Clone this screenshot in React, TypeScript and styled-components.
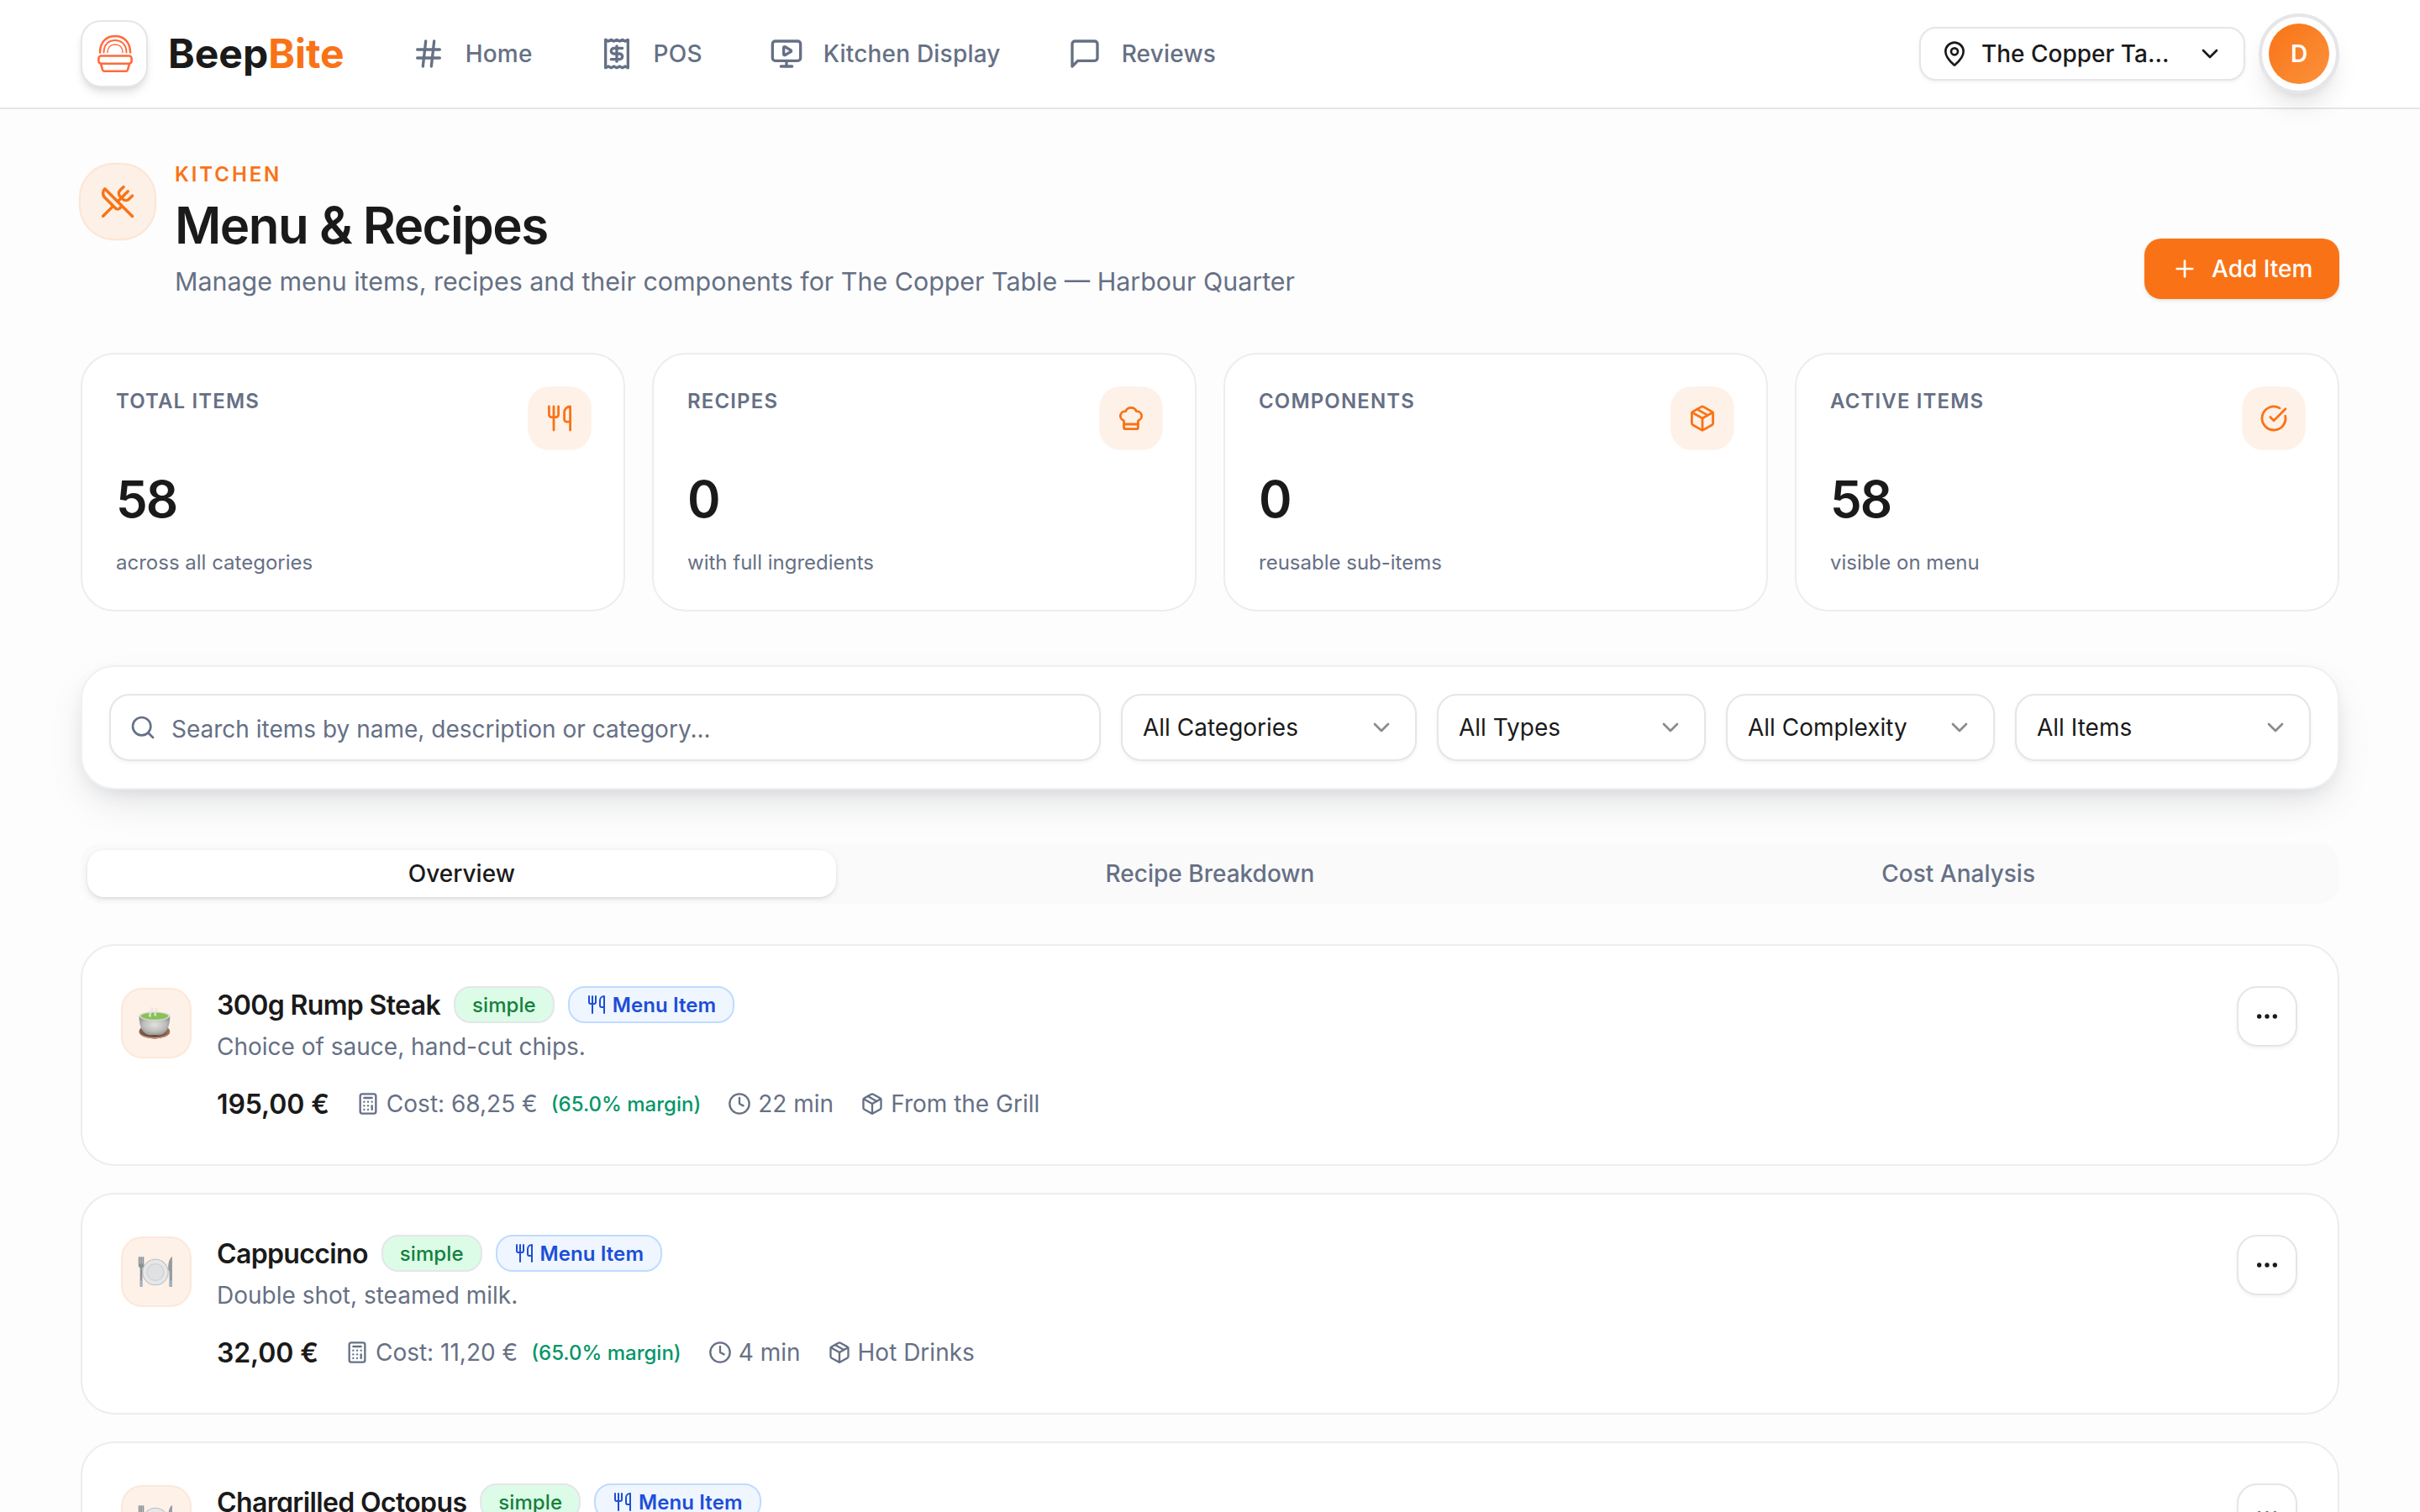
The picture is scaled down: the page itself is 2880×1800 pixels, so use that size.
import React from "react";
import styled, { createGlobalStyle } from "styled-components";
import {
  Calculator,
  ChefHat,
  ChevronDown,
  CircleCheckBig,
  Clock,
  Ellipsis,
  Hash,
  MapPin,
  MonitorPlay,
  Package,
  Plus,
  Search,
  UtensilsCrossed,
} from "lucide-react";

const color = {
  ink: "#1a1a1a",
  muted: "#667085",
  line: "#e5e5ea",
  softLine: "#ededf1",
  orange: "#f97316",
  peach: "#fef1e8",
};

const Global = createGlobalStyle`
  *, *::before, *::after { box-sizing: border-box; }
  html, body { margin: 0; height: 1800px; overflow: hidden; }
  body {
    background: #fdfdfd;
    color: ${color.ink};
    font-family: Inter, "Liberation Sans", sans-serif;
    font-size: 28px;
    -webkit-font-smoothing: antialiased;
  }
  button, input { font: inherit; color: inherit; margin: 0; }
  h1, h2, p { margin: 0; font-weight: inherit; }
  svg { display: block; flex: none; }
`;

const Page = styled.div`
  height: 1800px;
  overflow: hidden;
`;

/* ---------- header ---------- */
const Header = styled.header`
  display: flex;
  align-items: center;
  height: 130px;
  padding: 0 96px;
  background: #fff;
  border-bottom: 2px solid ${color.line};
`;
const LogoBox = styled.div`
  display: grid;
  place-items: center;
  width: 80px;
  height: 80px;
  padding-left: 2px;
  border: 2px solid ${color.line};
  border-radius: 24px;
  background: #fff;
  box-shadow: 0 8px 12px -2px rgba(0, 0, 0, 0.1), 0 4px 8px -4px rgba(0, 0, 0, 0.1);
`;
const Brand = styled.span`
  margin-left: 24px;
  font-size: 48px;
  font-weight: 700;
  line-height: 64px;
  letter-spacing: 0;
  em { font-style: normal; color: ${color.orange}; }
`;
const Nav = styled.nav`
  display: flex;
  gap: 80px;
  margin-left: 80px;
`;
const NavLink = styled.a`
  display: flex;
  align-items: center;
  gap: 24px;
  color: ${color.muted};
  font-weight: 500;
  letter-spacing: 0.2px;
`;
const HeaderEnd = styled.div`
  display: flex;
  align-items: center;
  gap: 16px;
  margin-left: auto;
`;
const LocationPicker = styled.button`
  display: flex;
  align-items: center;
  gap: 16px;
  width: 388px;
  height: 64px;
  padding: 0 24px;
  border: 2px solid ${color.line};
  border-radius: 20px;
  background: #fff;
  font-weight: 500;
  box-shadow: 0 2px 4px rgba(0, 0, 0, 0.05);
  svg:last-child { margin-left: auto; }
`;
const AvatarRing = styled.div`
  position: relative;
  display: grid;
  place-items: center;
  width: 96px;
  height: 96px;
  border: 4px solid ${color.line};
  border-radius: 50%;
  background: #fff;
  box-shadow: 0 20px 30px -6px rgba(0, 0, 0, 0.1), 0 8px 12px -8px rgba(0, 0, 0, 0.1);
`;
const Avatar = styled.div`
  display: grid;
  place-items: center;
  width: 72px;
  height: 72px;
  border-radius: 50%;
  background: linear-gradient(135deg, #f97316, #fb923c);
  color: #fff;
  font-weight: 600;
`;

/* ---------- page heading ---------- */
const Main = styled.main`
  padding: 62px 96px 0;
`;
const Hero = styled.section`
  display: flex;
  align-items: flex-start;
  height: 164px;
`;
const HeroIcon = styled.div`
  display: grid;
  place-items: center;
  width: 88px;
  height: 88px;
  margin: 4px 24px 0 0;
  border: 2px solid #fde6d6;
  border-radius: 40px;
  background: #fdf0e7;
  color: ${color.orange};
  transform: scale(1.05);
`;
const Eyebrow = styled.p`
  color: ${color.orange};
  font-size: 24px;
  font-weight: 600;
  line-height: 32px;
  letter-spacing: 2.9px;
`;
const Title = styled.h1`
  margin-top: 10px;
  font-size: 60px;
  font-weight: 600;
  line-height: 68px;
  letter-spacing: -1.5px;
`;
const Lead = styled.p`
  margin-top: 12px;
  color: ${color.muted};
  font-size: 30.4px;
  line-height: 42px;
`;
const AddButton = styled.button`
  display: flex;
  align-items: center;
  align-self: flex-end;
  gap: 16px;
  width: 232px;
  height: 72px;
  margin-left: auto;
  padding: 0 32px;
  border: 0;
  border-radius: 20px;
  background: ${color.orange};
  color: #fff;
  font-weight: 500;
  white-space: nowrap;
  box-shadow: 0 2px 4px rgba(0, 0, 0, 0.1);
`;

/* ---------- stats ---------- */
const Stats = styled.section`
  display: grid;
  grid-template-columns: repeat(4, 1fr);
  gap: 32px;
  margin-top: 64px;
`;
const StatCard = styled.article`
  height: 308px;
  padding: 40px;
  border: 2px solid ${color.softLine};
  border-radius: 40px;
  background: #fff;
`;
const StatHead = styled.div`
  display: flex;
  justify-content: space-between;
  height: 72px;
`;
const StatLabel = styled.span`
  color: ${color.muted};
  font-size: 24px;
  font-weight: 600;
  line-height: 32px;
  letter-spacing: 1.15px;
`;
const StatIcon = styled.div`
  display: grid;
  place-items: center;
  width: 72px;
  height: 72px;
  border-radius: 24px;
  background: ${color.peach};
  color: ${color.orange};
  transform: scale(1.05);
`;
const StatValue = styled.p`
  margin-top: 30px;
  font-size: 60px;
  font-weight: 600;
  line-height: 60px;
  letter-spacing: -2px;
`;
const StatNote = styled.p`
  margin-top: 28px;
  color: ${color.muted};
  font-size: 24px;
  line-height: 36px;
`;

/* ---------- filters ---------- */
const FilterBar = styled.section`
  display: flex;
  gap: 24px;
  height: 148px;
  margin-top: 64px;
  padding: 32px;
  border: 2px solid #f0f0f2;
  border-radius: 40px;
  background: #fff;
  box-shadow: 0 20px 50px -10px rgba(15, 23, 42, 0.12), 0 8px 24px -8px rgba(15, 23, 42, 0.1);
`;
const SearchField = styled.label`
  display: flex;
  flex: 1;
  align-items: center;
  gap: 18px;
  height: 80px;
  padding: 0 22px;
  border: 2px solid ${color.line};
  border-radius: 24px;
  background: #fff;
  color: ${color.muted};
  box-shadow: 0 2px 4px rgba(0, 0, 0, 0.05);
`;
const SearchInput = styled.input`
  flex: 1;
  height: 76px;
  padding: 3px 0 0;
  border: 0;
  outline: 0;
  background: none;
  &::placeholder { color: ${color.muted}; opacity: 1; }
`;
const FilterSelect = styled.button<{ $width: number }>`
  display: flex;
  align-items: center;
  justify-content: space-between;
  width: ${(p) => p.$width}px;
  height: 80px;
  padding: 0 24px;
  border: 2px solid ${color.line};
  border-radius: 24px;
  background: #fff;
  box-shadow: 0 2px 4px rgba(0, 0, 0, 0.05);
  svg { opacity: 0.5; }
`;

/* ---------- tabs ---------- */
const Tabs = styled.div`
  display: grid;
  grid-template-columns: repeat(3, 1fr);
  height: 72px;
  margin-top: 64px;
  padding: 8px;
  border-radius: 24px;
  background: #fafafa;
`;
const Tab = styled.button<{ $active?: boolean }>`
  border: 0;
  padding: 0;
  border-radius: 20px;
  background: ${(p) => (p.$active ? "#fff" : "transparent")};
  color: ${(p) => (p.$active ? color.ink : color.muted)};
  font-weight: 500;
  box-shadow: ${(p) => (p.$active ? "0 2px 6px rgba(0,0,0,.1), 0 2px 4px -2px rgba(0,0,0,.1)" : "none")};
`;

/* ---------- menu list ---------- */
const List = styled.section`
  display: flex;
  flex-direction: column;
  gap: 32px;
  margin-top: 48px;
`;
const ItemCard = styled.article`
  display: flex;
  align-items: flex-start;
  height: 264px;
  padding: 48px;
  border: 2px solid ${color.softLine};
  border-radius: 40px;
  background: #fff;
`;
const Thumb = styled.div`
  display: grid;
  place-items: center;
  width: 80px;
  height: 80px;
  margin: 4px 32px 0 0;
  padding-right: 3px;
  border: 2px solid #fde8d9;
  border-radius: 24px;
  background: ${color.peach};
  transform: scale(1.05);
`;
const TitleRow = styled.div`
  display: flex;
  align-items: center;
  gap: 16px;
  height: 44px;
`;
const ItemName = styled.h2`
  font-size: 32px;
  font-weight: 600;
  letter-spacing: -0.64px;
`;
const Badge = styled.span<{ $tone: "green" | "blue" }>`
  display: flex;
  align-items: center;
  gap: 7px;
  height: 44px;
  padding: 0 20px;
  border: 2px solid ${(p) => (p.$tone === "green" ? color.line : "#bfdbfe")};
  border-radius: 20px;
  background: ${(p) => (p.$tone === "green" ? "#dcfce7" : "#eff6ff")};
  color: ${(p) => (p.$tone === "green" ? "#15803d" : "#1d4ed8")};
  font-size: 24px;
  font-weight: ${(p) => (p.$tone === "green" ? 500 : 600)};
  letter-spacing: 0.08px;
`;
const Description = styled.p`
  margin-top: 8px;
  color: ${color.muted};
  line-height: 40px;
`;
const MetaRow = styled.div`
  display: flex;
  align-items: center;
  gap: 32px;
  height: 48px;
  margin-top: 24px;
  color: ${color.muted};
`;
const Price = styled.span`
  color: ${color.ink};
  font-size: 32px;
  font-weight: 600;
  letter-spacing: -0.1px;
`;
const Meta = styled.span`
  display: flex;
  align-items: center;
  gap: 8px;
`;
const Margin = styled.span`
  margin-left: 8px;
  color: #059669;
  font-size: 24px;
  font-weight: 500;
`;
const MoreButton = styled.button`
  display: grid;
  place-items: center;
  width: 72px;
  height: 72px;
  margin-left: auto;
  padding: 0;
  border: 2px solid ${color.line};
  border-radius: 24px;
  background: #fff;
  box-shadow: 0 2px 4px rgba(0, 0, 0, 0.05);
`;

/* ---------- drawings ---------- */
const BurgerLogo = () => (
  <svg width="46" height="46" viewBox="0 0 46 46" fill="none" stroke="#ff6b3d" strokeLinecap="round" strokeLinejoin="round">
    <path d="M5 21.500C5 9 12.500 2 23 2s18 7 18 19.500" strokeWidth="2.500" />
    <path d="M9.500 21.500C9.500 12.500 15 7 23 7s13.500 5.500 13.500 14.500" strokeWidth="2" />
    <path d="M14 21.500c0-6 3.500-9.500 9-9.500s9 3.500 9 9.500" strokeWidth="1.500" />
    <rect x="3.400" y="25.500" width="39.200" height="9.300" rx="3" strokeWidth="2.600" />
    <path d="M6 34.800l2 7.400q.5 1.600 2.200 1.600h25.600q1.700 0 2.200-1.600l2-7.400" strokeWidth="2.600" />
  </svg>
);
const ReceiptIcon = () => (
  <svg width="40" height="40" viewBox="0 0 24 24" fill="none" stroke="currentColor" strokeWidth="2" strokeLinecap="round" strokeLinejoin="round">
    <path d="M4 2v20l2-1 2 1 2-1 2 1 2-1 2 1 2-1 2 1V2l-2 1-2-1-2 1-2-1-2 1-2-1-2 1Z" />
    <path d="M16 8h-6a2 2 0 1 0 0 4h4a2 2 0 1 1 0 4H8" />
    <path d="M12 17.500v-11" />
  </svg>
);
const ChatIcon = () => (
  <svg width="40" height="40" viewBox="0 0 24 24" fill="none" stroke="currentColor" strokeWidth="2" strokeLinecap="round" strokeLinejoin="round">
    <path d="M21 15a2 2 0 0 1-2 2H7l-4 4V5a2 2 0 0 1 2-2h14a2 2 0 0 1 2 2z" />
  </svg>
);
const CutleryIcon = ({ size }: { size: number }) => (
  <svg width={size} height={size} viewBox="0 0 24 24" fill="none" stroke="currentColor" strokeWidth="2" strokeLinecap="round" strokeLinejoin="round">
    <path d="M3 2v7c0 1.100.9 2 2 2h4a2 2 0 0 0 2-2V2" />
    <path d="M7 2v20" />
    <path d="M21 15V2a5 5 0 0 0-5 5v6c0 1.100.9 2 2 2h3Zm0 0v7" />
  </svg>
);
const TeaCup = () => (
  <svg width="40" height="40" viewBox="0 0 40 40">
    <defs>
      <radialGradient id="cup" cx=".5" cy=".45" r=".6">
        <stop offset="0" stopColor="#e2e2e0" />
        <stop offset=".6" stopColor="#bdbdbb" />
        <stop offset="1" stopColor="#8b8b89" />
      </radialGradient>
      <linearGradient id="saucer" x1="0" x2="1">
        <stop offset="0" stopColor="#8a6350" />
        <stop offset=".5" stopColor="#4b2c20" />
        <stop offset="1" stopColor="#a07460" />
      </linearGradient>
    </defs>
    <ellipse cx="19" cy="29.500" rx="17.500" ry="8" fill="url(#saucer)" />
    <path d="M1.500 29.500c0 10.500 35 10.500 35 0 0 8-35 8-35 0z" fill="#b98a72" />
    <path d="M1.500 12c0 12 4 21 12 21.800h11c8-.8 12-9.800 12-21.800z" fill="url(#cup)" />
    <ellipse cx="19" cy="12" rx="17.500" ry="5.200" fill="#d7d9d2" />
    <ellipse cx="19" cy="12" rx="15.500" ry="4" fill="#86c255" />
    <path d="M14 12c-2-4 4-5 2-9M20 11c-2-4 3-4 1-7" stroke="#e9e4de" strokeWidth="2.500" fill="none" opacity=".8" strokeLinecap="round" />
  </svg>
);
const PlateSetting = () => (
  <svg width="40" height="40" viewBox="0 0 40 40">
    <circle cx="20" cy="20.500" r="14.500" fill="#e6e7e8" stroke="#bcbfc1" strokeWidth="1" />
    <circle cx="20" cy="20.500" r="9.500" fill="#e0e1e2" stroke="#cdd3da" strokeWidth="1.200" />
    <path d="M.8 3v9.500c0 1.800 1 2.500 1.800 3V37h2.600V15.500c.9-.5 1.800-1.200 1.800-3V3" fill="#8b9094" />
    <path d="M2.700 3v8M5.100 3v8" stroke="#d9dbdd" strokeWidth=".7" />
    <path d="M39 2.500c-3 2-4.500 7-4.500 13.500 0 2 .6 3 1.300 3.500V37H39z" fill="#959ba0" />
    <path d="M2.600 30h2.600v7H2.600zM35.800 30H39v7h-3.200z" fill="#9fb4c8" />
  </svg>
);

const stats = [
  { label: "TOTAL ITEMS", value: "58", note: "across all categories", icon: <CutleryIcon size={32} /> },
  { label: "RECIPES", value: "0", note: "with full ingredients", icon: <ChefHat size={32} /> },
  { label: "COMPONENTS", value: "0", note: "reusable sub-items", icon: <Package size={32} /> },
  { label: "ACTIVE ITEMS", value: "58", note: "visible on menu", icon: <CircleCheckBig size={32} /> },
];

const filters = [
  { label: "All Categories", width: 352 },
  { label: "All Types", width: 320 },
  { label: "All Complexity", width: 320 },
  { label: "All Items", width: 352 },
];

const items = [
  { name: "300g Rump Steak", text: "Choice of sauce, hand-cut chips.", price: "195,00 €", cost: "68,25 €", time: "22 min", group: "From the Grill", picture: <TeaCup /> },
  { name: "Cappuccino", text: "Double shot, steamed milk.", price: "32,00 €", cost: "11,20 €", time: "4 min", group: "Hot Drinks", picture: <PlateSetting /> },
  { name: "Chargrilled Octopus", text: "", price: "", cost: "", time: "", group: "", picture: <PlateSetting /> },
];

export default function App() {
  return (
    <Page>
      <Global />
      <Header>
        <LogoBox>
          <BurgerLogo />
        </LogoBox>
        <Brand>
          Beep<em>Bite</em>
        </Brand>
        <Nav>
          <NavLink><Hash size={40} />Home</NavLink>
          <NavLink><ReceiptIcon />POS</NavLink>
          <NavLink><MonitorPlay size={40} />Kitchen Display</NavLink>
          <NavLink><ChatIcon />Reviews</NavLink>
        </Nav>
        <HeaderEnd>
          <LocationPicker>
            <MapPin size={32} />
            The Copper Ta...
            <ChevronDown size={32} />
          </LocationPicker>
          <AvatarRing>
            <Avatar>D</Avatar>
          </AvatarRing>
        </HeaderEnd>
      </Header>

      <Main>
        <Hero>
          <HeroIcon>
            <UtensilsCrossed size={40} />
          </HeroIcon>
          <div>
            <Eyebrow>KITCHEN</Eyebrow>
            <Title>Menu &amp; Recipes</Title>
            <Lead>Manage menu items, recipes and their components for The Copper Table — Harbour Quarter</Lead>
          </div>
          <AddButton>
            <Plus size={32} />
            Add Item
          </AddButton>
        </Hero>

        <Stats>
          {stats.map((s) => (
            <StatCard key={s.label}>
              <StatHead>
                <StatLabel>{s.label}</StatLabel>
                <StatIcon>{s.icon}</StatIcon>
              </StatHead>
              <StatValue>{s.value}</StatValue>
              <StatNote>{s.note}</StatNote>
            </StatCard>
          ))}
        </Stats>

        <FilterBar>
          <SearchField>
            <Search size={32} />
            <SearchInput placeholder="Search items by name, description or category..." />
          </SearchField>
          {filters.map((f) => (
            <FilterSelect key={f.label} $width={f.width}>
              {f.label}
              <ChevronDown size={32} />
            </FilterSelect>
          ))}
        </FilterBar>

        <Tabs>
          <Tab $active>Overview</Tab>
          <Tab>Recipe Breakdown</Tab>
          <Tab>Cost Analysis</Tab>
        </Tabs>

        <List>
          {items.map((item) => (
            <ItemCard key={item.name}>
              <Thumb>{item.picture}</Thumb>
              <div>
                <TitleRow>
                  <ItemName>{item.name}</ItemName>
                  <Badge $tone="green">simple</Badge>
                  <Badge $tone="blue">
                    <CutleryIcon size={24} />
                    Menu Item
                  </Badge>
                </TitleRow>
                {item.text && (
                  <>
                    <Description>{item.text}</Description>
                    <MetaRow>
                      <Price>{item.price}</Price>
                      <Meta>
                        <Calculator size={28} />
                        Cost: {item.cost}
                        <Margin>(65.0% margin)</Margin>
                      </Meta>
                      <Meta><Clock size={28} />{item.time}</Meta>
                      <Meta><Package size={28} />{item.group}</Meta>
                    </MetaRow>
                  </>
                )}
              </div>
              <MoreButton>
                <Ellipsis size={32} />
              </MoreButton>
            </ItemCard>
          ))}
        </List>
      </Main>
    </Page>
  );
}
